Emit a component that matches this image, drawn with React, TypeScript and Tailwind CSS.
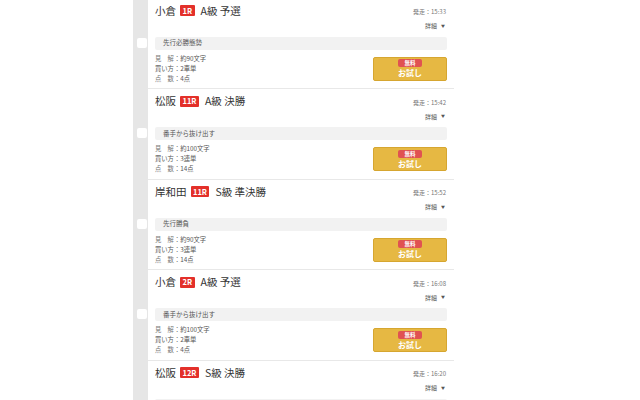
import React from "react";

type Race = {
  place: string;
  race: string;
  grade: string;
  start: string;
  comment: string;
  length: string;
  howto: string;
  points: string;
};

const races: Race[] = [
  { place: "小倉", race: "1R", grade: "A級 予選", start: "15:33", comment: "先行必勝態勢", length: "約90文字", howto: "2車単", points: "4点" },
  { place: "松阪", race: "11R", grade: "A級 決勝", start: "15:42", comment: "番手から抜け出す", length: "約100文字", howto: "3連単", points: "14点" },
  { place: "岸和田", race: "11R", grade: "S級 準決勝", start: "15:52", comment: "先行勝負", length: "約90文字", howto: "3連単", points: "14点" },
  { place: "小倉", race: "2R", grade: "A級 予選", start: "16:08", comment: "番手から抜け出す", length: "約100文字", howto: "2車単", points: "4点" },
  { place: "松阪", race: "12R", grade: "S級 決勝", start: "16:20", comment: "先行勝負", length: "約90文字", howto: "3連単", points: "14点" },
];

function RaceItem({ r }: { r: Race }) {
  return (
    <div className="flex h-[90.5px]">
      <div className="w-[15px] shrink-0 bg-[#e6e6e6]">
        <div className="ml-[4px] mt-[39px] h-[10px] w-[10px] rounded-[2px] bg-white" />
      </div>
      <div className="w-[306px] border-b border-[#e8e8e8] pl-[7px] pr-[7px] pt-[5px]">
        <div className="flex h-[14px] items-center justify-between pr-[1px]">
          <div className="flex items-center text-[10.5px] leading-[14px] text-[#333]">
            <span>{r.place}</span>
            <span className="ml-[4px] mr-[6px] flex h-[11px] items-center rounded-[1px] bg-[#e3302a] px-[2.5px] text-[7.5px] font-bold leading-none text-white">
              {r.race}
            </span>
            <span>{r.grade}</span>
          </div>
          <span className="mt-[2px] text-[6px] text-[#777]">発走：{r.start}</span>
        </div>
        <div className="flex h-[16px] items-center justify-end pr-[2px] text-[6px] text-[#555]">
          詳細<span className="ml-[4px] text-[4px]">▼</span>
        </div>
        <div className="mt-[3px] flex h-[13px] items-center rounded-[2px] bg-[#f2f2f2] pl-[8px] text-[6.5px] text-[#555]">
          {r.comment}
        </div>
        <div className="mt-[4px] flex items-center justify-between">
          <div className="text-[6.3px] leading-[10px] text-[#555]">
            <div>
              <span className="text-[#777]">見　解</span>：{r.length}
            </div>
            <div>
              <span>買い方</span>：{r.howto}
            </div>
            <div>
              <span className="text-[#777]">点　数</span>：{r.points}
            </div>
          </div>
          <div className="flex h-[24px] w-[74px] flex-col items-center justify-center rounded-[2px] border border-[#d6a630] bg-[#e6b843]">
            <span className="rounded-[2px] bg-[#e05252] px-[6px] text-[5.5px] font-bold leading-[8px] text-white">無料</span>
            <span className="text-[8px] font-bold leading-[11px] text-white">お試し</span>
          </div>
        </div>
      </div>
    </div>
  );
}

export default function App() {
  return (
    <main
      className="h-[400px] w-[640px] overflow-hidden bg-white"
      style={{ fontFamily: '"Noto Sans CJK JP", "Noto Sans", sans-serif' }}
    >
      <div className="ml-[133px] mt-[-1.5px] w-[321px]">
        {races.map((r, i) => (
          <RaceItem key={i} r={r} />
        ))}
      </div>
    </main>
  );
}
